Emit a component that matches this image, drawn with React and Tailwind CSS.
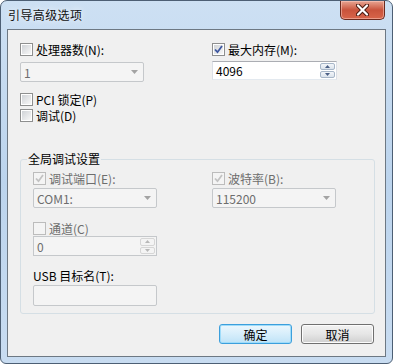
import React from "react";

const Check = ({ checked, disabled }) => {
  return (
    <span
      className={`w-[13px] h-[13px] shrink-0 border p-[1px] flex ${
        disabled ? "border-[#bcbcbc] bg-[#f4f4f4]" : "border-[#8e8f8f] bg-white"
      }`}
    >
      <span
        className={`flex-1 flex items-center justify-center ${
          disabled ? "bg-[#f4f4f4]" : "bg-gradient-to-br from-[#d0d3d7] to-[#f8f8f8]"
        }`}
      >
        {checked && (
          <svg width="9" height="9" viewBox="0 0 9 9">
            <path
              d="M1 4.5 L3.5 7.2 L8 1"
              fill="none"
              stroke={disabled ? "#c2c2c2" : "#3d57a0"}
              strokeWidth="1.8"
            />
          </svg>
        )}
      </span>
    </span>
  );
};

const CheckRow = ({ label, checked, disabled, className = "" }) => {
  return (
    <div className={`flex items-center h-[13px] gap-[3px] ${className}`}>
      <Check checked={checked} disabled={disabled} />
      <span className={`leading-[13px] whitespace-nowrap ${disabled ? "text-[#6d6d6d]" : "text-black"}`}>
        {label}
      </span>
    </div>
  );
};

const Select = ({ value, className = "" }) => {
  return (
    <div
      className={`w-[124px] h-[20px] border border-[#c5c8cb] rounded-[2px] bg-[#f4f4f4] flex items-center justify-between pl-[3px] pr-[5px] text-[#6d6d6d] ${className}`}
    >
      <span className="leading-[13px]">{value}</span>
      <svg width="7" height="4" viewBox="0 0 7 4">
        <path d="M0 0 H7 L3.5 4 Z" fill="#a3a3a3" />
      </svg>
    </div>
  );
};

const Arrow = ({ up, color }) => (
  <svg width="5" height="3" viewBox="0 0 5 3">
    <path d={up ? "M0 3 H5 L2.5 0 Z" : "M0 0 H5 L2.5 3 Z"} fill={color} />
  </svg>
);

const Spin = ({ value, disabled, className = "" }) => {
  return (
    <div
      className={`w-[124px] flex border ${
        disabled
          ? "h-[20px] border-[#c5c8cb] bg-[#f4f4f4] text-[#6d6d6d]"
          : "h-[19px] border-[#abadb3] border-b-[#e3e9ef] border-x-[#dbdfe6] bg-white text-black"
      } ${className}`}
    >
      <span className="flex-1 flex items-center pl-[3px] leading-[13px]">{value}</span>
      <div className="w-[16px] flex flex-col gap-[1px] p-[1px] pl-0">
        <div
          className={`flex-1 flex items-center justify-center border rounded-[2px] ${
            disabled ? "border-[#d6d6d6] bg-[#f4f4f4]" : "border-[#a7b6c8] bg-gradient-to-b from-[#f3f6fa] to-[#dbe3ec]"
          }`}
        >
          <Arrow up color={disabled ? "#b8b8b8" : "#4c6086"} />
        </div>
        <div
          className={`flex-1 flex items-center justify-center border rounded-[2px] ${
            disabled ? "border-[#d6d6d6] bg-[#f4f4f4]" : "border-[#a7b6c8] bg-gradient-to-b from-[#f3f6fa] to-[#dbe3ec]"
          }`}
        >
          <Arrow color={disabled ? "#b8b8b8" : "#4c6086"} />
        </div>
      </div>
    </div>
  );
};

const CloseButton = () => {
  return (
    <div className="w-[45px] h-[19px] rounded-b-[5px] border border-t-0 border-[#6b2a1e] bg-gradient-to-b from-[#e7a593] via-[#c9533c] to-[#d8654a] flex items-center justify-center shadow-[inset_0_0_0_1px_rgba(255,210,200,0.5)]">
      <svg width="13" height="12" viewBox="0 0 13 12">
        <path d="M2 1.5 L11 10.5 M11 1.5 L2 10.5" stroke="#4a1a10" strokeWidth="4.2" strokeLinecap="round" />
        <path d="M2 1.5 L11 10.5 M11 1.5 L2 10.5" stroke="#ffffff" strokeWidth="2.2" strokeLinecap="round" />
      </svg>
    </div>
  );
};

const App = () => {
  return (
    <div className="w-[393px] h-[364px] bg-white font-['Noto_Sans_CJK_SC',sans-serif] text-[12px] text-black">
      <div className="w-full h-full rounded-t-[7px] rounded-b-[6px] border border-[#4d5f74] bg-gradient-to-b from-[#cde0f3] via-[#bcd4ed] to-[#c8dcf1] flex flex-col">
        <div className="h-[28px] shrink-0 flex items-start justify-between pl-[7px] pr-[7px]">
          <span className="mt-[7px] text-[12px] leading-[14px] tracking-[0.4px] text-[#111] [text-shadow:0_0_6px_#ffffff]">
            引导高级选项
          </span>
          <CloseButton />
        </div>

        <div className="mx-[6px] mb-[6px] flex-1 border border-[#6d7883] bg-[#f0f0f0] flex flex-col">
          <div className="pl-[12px] pt-[13px] flex gap-[68px]">
            <div className="w-[124px] flex flex-col">
              <CheckRow label="处理器数(N):" />
              <Select value="1" className="mt-[6px]" />
              <CheckRow label="PCI 锁定(P)" className="mt-[11px]" />
              <CheckRow label="调试(D)" className="mt-[3px]" />
            </div>
            <div className="w-[125px] flex flex-col">
              <CheckRow label="最大内存(M):" checked />
              <Spin value="4096" className="mt-[5px] w-[125px]" />
            </div>
          </div>

          <fieldset className="ml-[12px] mt-[30px] w-[355px] border border-[#d5dfe5] rounded-[3px] pl-[12px] pt-[6px] pb-[7px]">
            <legend className="ml-[-6px] px-[1px] leading-[14px] text-black">全局调试设置</legend>
            <div className="flex gap-[55px]">
              <div className="w-[124px] flex flex-col">
                <CheckRow label="调试端口(E):" checked disabled />
                <Select value="COM1:" className="mt-[3px]" />
                <CheckRow label="通道(C)" disabled className="mt-[14px]" />
                <Spin value="0" disabled className="mt-[1px]" />
                <div className="mt-[13px] h-[13px] leading-[13px] whitespace-nowrap">USB 目标名(T):</div>
                <div className="mt-[3px] w-[124px] h-[21px] border border-[#c5c8cb] rounded-[2px] bg-[#f4f4f4]" />
              </div>
              <div className="w-[124px] flex flex-col">
                <CheckRow label="波特率(B):" checked disabled />
                <Select value="115200" className="mt-[3px]" />
              </div>
            </div>
          </fieldset>

          <div className="mt-[10px] pr-[11px] flex justify-end gap-[9px]">
            <button className="w-[73px] h-[20px] rounded-[3px] border border-[#3c9fdc] bg-gradient-to-b from-[#ecf7fd] via-[#d7eefb] to-[#bfe3f7] shadow-[inset_0_0_0_1px_#9fdcfa] flex items-center justify-center text-black leading-[13px]">
              确定
            </button>
            <button className="w-[73px] h-[20px] rounded-[3px] border border-[#707070] bg-gradient-to-b from-[#f2f2f2] via-[#e6e6e6] to-[#cfcfcf] shadow-[inset_0_0_0_1px_#fcfcfc] flex items-center justify-center text-black leading-[13px]">
              取消
            </button>
          </div>
        </div>
      </div>
    </div>
  );
};

export default App;
